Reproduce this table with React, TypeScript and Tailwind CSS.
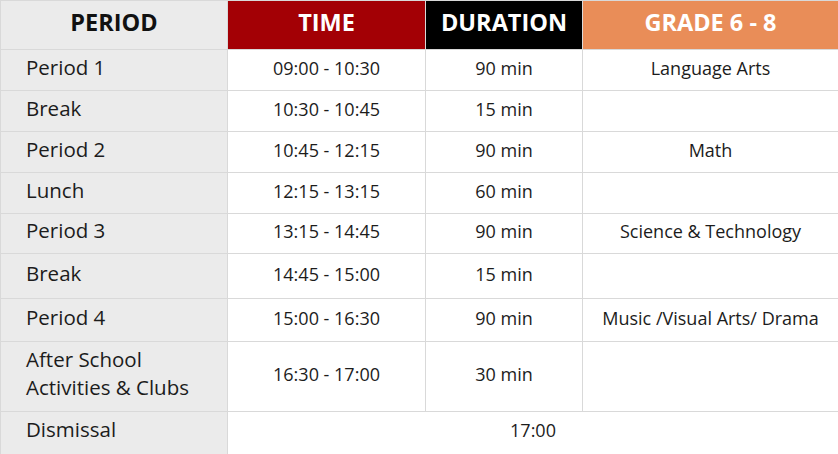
import React from "react";

type Row = {
  period: React.ReactNode;
  time: string;
  duration: string;
  subject: string;
  h: string;
};

const rows: Row[] = [
  { period: "Period 1", time: "09:00 - 10:30", duration: "90 min", subject: "Language Arts", h: "h-[41px]" },
  { period: "Break", time: "10:30 - 10:45", duration: "15 min", subject: "", h: "h-[41px]" },
  { period: "Period 2", time: "10:45 - 12:15", duration: "90 min", subject: "Math", h: "h-[41px]" },
  { period: "Lunch", time: "12:15 - 13:15", duration: "60 min", subject: "", h: "h-[41px]" },
  { period: "Period 3", time: "13:15 - 14:45", duration: "90 min", subject: "Science & Technology", h: "h-[40px]" },
  { period: "Break", time: "14:45 - 15:00", duration: "15 min", subject: "", h: "h-[45px]" },
  { period: "Period 4", time: "15:00 - 16:30", duration: "90 min", subject: "Music /Visual Arts/ Drama", h: "h-[43px]" },
  {
    period: (
      <>
        After School
        <br />
        Activities &amp; Clubs
      </>
    ),
    time: "16:30 - 17:00",
    duration: "30 min",
    subject: "",
    h: "h-[70px]",
  },
];

const cell = "border border-[#d9d9d9] p-0";

export default function App() {
  return (
    <div className="w-[838px] h-[454px] bg-white font-['Open_Sans',sans-serif] text-[#1c1c1c]">
      <table className="w-[838px] border-collapse table-fixed">
        <colgroup>
          <col className="w-[227px]" />
          <col className="w-[198px]" />
          <col className="w-[157px]" />
          <col className="w-[256px]" />
        </colgroup>
        <thead>
          <tr className="h-[49px] text-[23.5px] font-semibold">
            <th className={`${cell} bg-[#ebebeb] text-[#111] pb-[5px]`}>PERIOD</th>
            <th className={`${cell} bg-[#a30005] text-white pb-[5px]`}>TIME</th>
            <th className={`${cell} bg-black text-white pb-[5px]`}>DURATION</th>
            <th className={`${cell} bg-[#e98d58] text-white pb-[5px]`}>GRADE 6 - 8</th>
          </tr>
        </thead>
        <tbody>
          {rows.map((r, i) => (
            <tr key={i} className={r.h}>
              <td className={`${cell} bg-[#ebebeb] pl-[25px] pb-[7px] text-[20.5px] leading-[28px]`}>{r.period}</td>
              <td className={`${cell} text-center pb-[4px] text-[18px]`}>{r.time}</td>
              <td className={`${cell} text-center pb-[4px] text-[18px]`}>{r.duration}</td>
              <td className={`${cell} text-center pb-[4px] text-[18px]`}>{r.subject}</td>
            </tr>
          ))}
          <tr className="h-[43px]">
            <td className={`${cell} bg-[#ebebeb] pl-[25px] pb-[7px] text-[20.5px]`}>Dismissal</td>
            <td colSpan={3} className={`${cell} text-center pb-[6px] text-[18px]`}>
              17:00
            </td>
          </tr>
        </tbody>
      </table>
    </div>
  );
}
